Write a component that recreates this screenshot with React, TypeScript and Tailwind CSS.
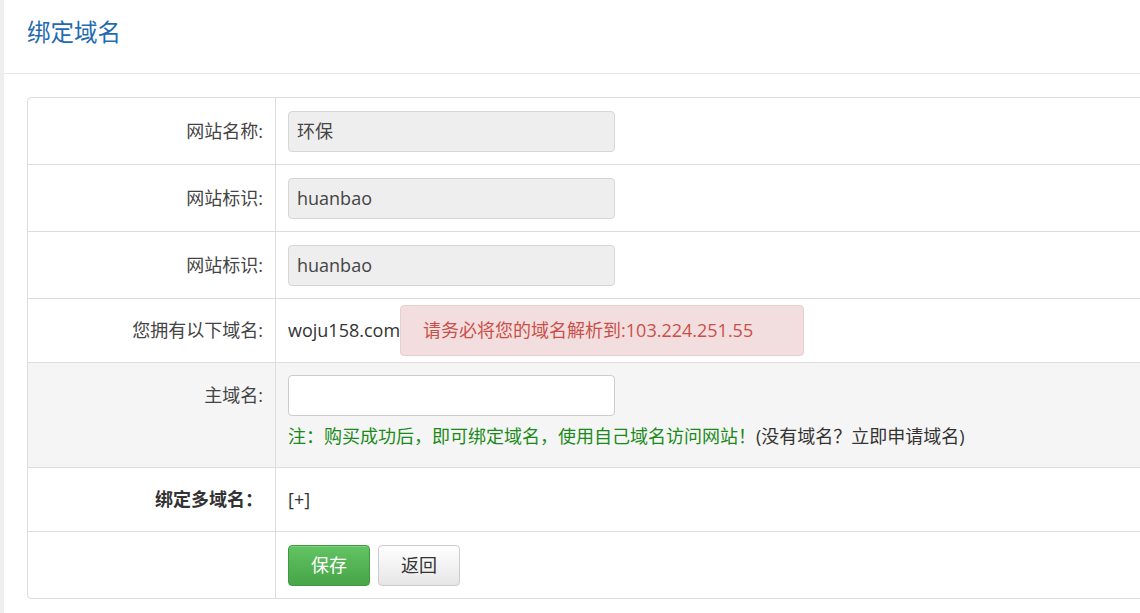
import React from "react";

const font = "font-['Open_Sans','Noto_Sans_CJK_SC',sans-serif]";

function Label({ children, bold }: { children: React.ReactNode; bold?: boolean }) {
  return (
    <div className={`w-[248px] shrink-0 flex justify-end pr-[12px] border-r border-[#dddddd] ${bold ? "font-bold text-[#333]" : "text-[#444]"}`}>
      {children}
    </div>
  );
}

export default function App() {
  return (
    <div className={`${font} w-[1140px] h-[613px] overflow-hidden flex bg-white text-[18px] text-[#333]`}>
      {/* left strip */}
      <div className="w-[4px] shrink-0 bg-[#eeeeee]" />

      <div className="flex-1 flex flex-col min-w-0">
        {/* Header */}
        <div className="h-[74px] shrink-0 flex items-center pl-[23px] pb-[8px] border-b border-[#e8e8e8]">
          <h1 className="text-[23.5px] text-[#1f6bb0] font-normal">绑定域名</h1>
        </div>

        {/* Form table */}
        <div className="mt-[23px] ml-[23px] w-[1160px] border border-[#dddddd] rounded-[4px] flex flex-col">
          {/* 网站名称 */}
          <div className="h-[66px] flex">
            <Label><span className="self-center">网站名称:</span></Label>
            <div className="flex items-center pl-[12px]">
              <div className="w-[327px] h-[41px] flex items-center px-[8px] bg-[#eeeeee] border border-[#d6d6d6] rounded-[4px] text-[#444]">环保</div>
            </div>
          </div>

          {/* 网站标识 */}
          <div className="h-[67px] flex border-t border-[#dddddd]">
            <Label><span className="self-center">网站标识:</span></Label>
            <div className="flex items-center pl-[12px]">
              <div className="w-[327px] h-[41px] flex items-center px-[8px] bg-[#eeeeee] border border-[#d6d6d6] rounded-[4px] text-[#444]">huanbao</div>
            </div>
          </div>

          {/* 网站标识 */}
          <div className="h-[67px] flex border-t border-[#dddddd]">
            <Label><span className="self-center">网站标识:</span></Label>
            <div className="flex items-center pl-[12px]">
              <div className="w-[327px] h-[41px] flex items-center px-[8px] bg-[#eeeeee] border border-[#d6d6d6] rounded-[4px] text-[#444]">huanbao</div>
            </div>
          </div>

          {/* 您拥有以下域名 */}
          <div className="h-[64px] flex border-t border-[#dddddd]">
            <Label><span className="self-center">您拥有以下域名:</span></Label>
            <div className="flex items-center pl-[12px]">
              <span className="text-[#333]">woju158.com</span>
              <div className="w-[404px] h-[51px] flex items-center pl-[22px] bg-[#f2dede] border border-[#ebccd1] rounded-[4px] text-[#c9504a]">
                请务必将您的域名解析到:103.224.251.55
              </div>
            </div>
          </div>

          {/* 主域名 */}
          <div className="h-[105px] flex border-t border-[#dddddd] bg-[#f5f5f5]">
            <Label><span className="mt-[19px]">主域名:</span></Label>
            <div className="flex flex-col pl-[12px] pt-[12px]">
              <div className="w-[327px] h-[41px] bg-white border border-[#cccccc] rounded-[4px]" />
              <p className="mt-[7px]">
                <span className="text-[#1a8a1a]">注：购买成功后，即可绑定域名，使用自己域名访问网站！</span>
                <span className="text-[#333]">(没有域名？立即申请域名)</span>
              </p>
            </div>
          </div>

          {/* 绑定多域名 */}
          <div className="h-[64px] flex border-t border-[#dddddd]">
            <Label bold><span className="self-center">绑定多域名：</span></Label>
            <div className="flex items-center pl-[12px]">
              <span className="text-[#333]">[+]</span>
            </div>
          </div>

          {/* Buttons */}
          <div className="h-[67px] flex border-t border-[#dddddd]">
            <Label><span /></Label>
            <div className="flex items-center gap-[8px] pl-[12px]">
              <button className="w-[82px] h-[41px] rounded-[4px] border border-[#3e9a3e] bg-gradient-to-b from-[#62c462] to-[#47a447] text-white text-[18px] shadow-[inset_0_1px_0_rgba(255,255,255,0.2)]">
                保存
              </button>
              <button className="w-[82px] h-[41px] rounded-[4px] border border-[#cccccc] bg-gradient-to-b from-white to-[#e6e6e6] text-[#333] text-[18px]">
                返回
              </button>
            </div>
          </div>
        </div>
      </div>
    </div>
  );
}
